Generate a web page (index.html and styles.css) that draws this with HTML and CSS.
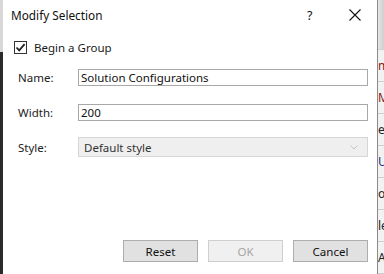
FILE: index.html
```html
<!DOCTYPE html>
<html lang="en">
<head>
    <meta charset="UTF-8">
    <title>Modify Selection</title>
    <link rel="stylesheet" href="styles.css">
</head>
<body>
    <div class="screen">
        <div class="left-edge"></div>

        <div class="dialog">
            <div class="titlebar">
                <span class="title">Modify Selection</span>
                <span class="help">?</span>
                <span class="close">
                    <svg width="12" height="12" viewBox="0 0 12 12">
                        <path d="M0.5 0.5 L11.5 11.5 M11.5 0.5 L0.5 11.5" stroke="#111" stroke-width="1.1" fill="none"/>
                    </svg>
                </span>
            </div>

            <div class="content">
                <div class="check-row">
                    <span class="checkbox">
                        <svg width="11" height="11" viewBox="0 0 11 11">
                            <path d="M1.5 5.5 L4.2 8.3 L9.6 2.2" stroke="#222" stroke-width="1.8" fill="none"/>
                        </svg>
                    </span>
                    <span>Begin a Group</span>
                </div>

                <div class="field name-row">
                    <span class="label">Name:</span>
                    <div class="textbox">Solution Configurations</div>
                </div>

                <div class="field width-row">
                    <span class="label">Width:</span>
                    <div class="textbox">200</div>
                </div>

                <div class="field style-row">
                    <span class="label">Style:</span>
                    <div class="select">
                        <span>Default style</span>
                        <svg width="8" height="5" viewBox="0 0 8 5">
                            <path d="M0.5 0.5 L4 4 L7.5 0.5" stroke="#c4c4c4" stroke-width="1" fill="none"/>
                        </svg>
                    </div>
                </div>

                <div class="button-container">
                    <button>Reset</button>
                    <button class="disabled">OK</button>
                    <button>Cancel</button>
                </div>
            </div>
        </div>

        <div class="right-edge">
            <div class="cell head"></div>
            <div class="cell c-red">m</div>
            <div class="cell c-red">M</div>
            <div class="cell">e</div>
            <div class="cell c-blue">U</div>
            <div class="cell">o</div>
            <div class="cell">le</div>
            <div class="cell">A</div>
        </div>
    </div>
</body>
</html>
```

FILE: styles.css
```css
body {
    margin: 0;
    padding: 0;
    font-family: "Noto Sans", "Open Sans", sans-serif;
    font-size: 11.5px;
    color: #1a1a1a;
    background-color: #2b2b2b;
}

.screen {
    display: flex;
    width: 384px;
    height: 274px;
    overflow: hidden;
}

/* bande sombre de l'application derriere */
.left-edge {
    width: 3px;
    background: linear-gradient(#d8d8d8 0, #d8d8d8 52px, #2a2a2a 52px);
}

/* la fenetre de dialogue */
.dialog {
    width: 374px;
    height: 274px;
    background-color: #fff;
    border-right: 1px solid #8a8a8a;
    display: flex;
    flex-direction: column;
}

.titlebar {
    height: 30px;
    display: flex;
    align-items: center;
    padding-left: 8px;
}

.title {
    flex: 1;
    font-size: 11.8px;
    color: #111;
}

.help {
    width: 14px;
    margin-right: 28px;
    font-size: 12.5px;
    color: #111;
}

.close {
    width: 12px;
    margin-right: 16px;
    display: flex;
}

.content {
    flex: 1;
    display: flex;
    flex-direction: column;
    padding: 0 9px 12px 11px;
}

.check-row {
    display: flex;
    align-items: center;
    gap: 7px;
    margin-top: 11px;
    height: 13px;
}

.checkbox {
    width: 11px;
    height: 11px;
    border: 1px solid #333;
    display: flex;
}

.field {
    display: flex;
    align-items: center;
}

.label {
    width: 60px;
    padding-left: 4px;
    color: #222;
}

.name-row {
    margin-top: 15px;
}

.width-row {
    margin-top: 18px;
}

.style-row {
    margin-top: 16px;
}

.textbox {
    flex: 1;
    height: 15px;
    line-height: 15px;
    border: 1px solid #a8a8a8;
    padding-left: 2px;
    color: #111;
}

.select {
    flex: 1;
    height: 18px;
    border: 1px solid #d6d6d6;
    background-color: #efefef;
    display: flex;
    align-items: center;
    justify-content: space-between;
    padding: 0 9px 0 5px;
    color: #333;
}

.button-container {
    margin-top: auto;
    display: flex;
    justify-content: flex-end;
    gap: 10px;
}

.button-container button {
    width: 75px;
    height: 22px;
    padding: 0;
    font-family: inherit;
    font-size: 11.5px;
    color: #111;
    background-color: #e1e1e1;
    border: 1px solid #adadad;
}

.button-container button.disabled {
    background-color: #f0f0f0;
    border-color: #cfcfcf;
    color: #a5a5a5;
}

/* tableau visible a droite */
.right-edge {
    width: 6px;
    background-color: #f2f2f2;
    display: flex;
    flex-direction: column;
}

.cell {
    height: 31px;
    border-bottom: 1px solid #cfcfcf;
    font-size: 12px;
    line-height: 31px;
    color: #222;
    white-space: nowrap;
    overflow: hidden;
}

.cell.head {
    height: 49px;
    background: linear-gradient(90deg, #e6e6e6, #cfcfcf);
}

.c-red {
    color: #8a1c1c;
}

.c-blue {
    color: #1c2f8a;
}
```
